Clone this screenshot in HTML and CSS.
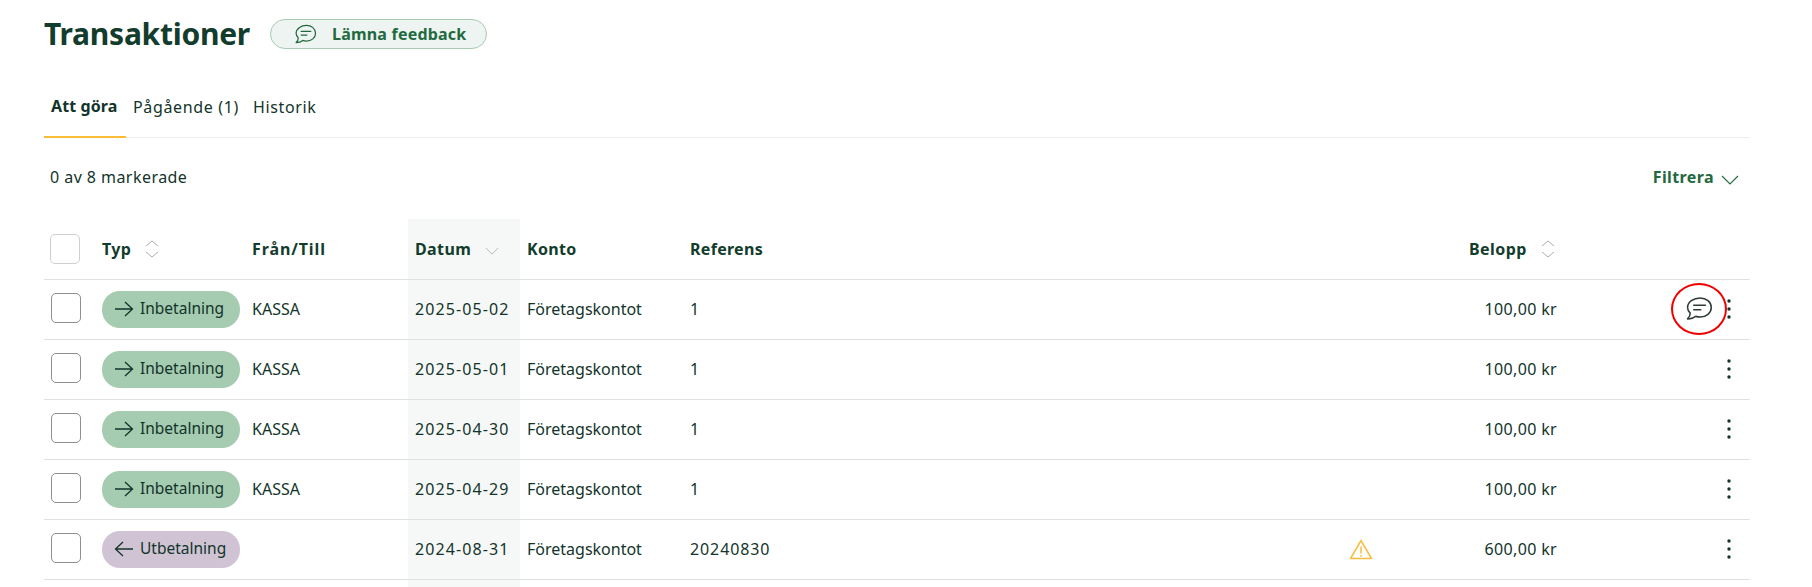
FILE: index.html
```html
<!DOCTYPE html>
<html lang="sv">
<head>
<meta charset="utf-8">
<title>Transaktioner</title>
<link rel="stylesheet" href="styles.css">
</head>
<body>
<svg class="defs" width="0" height="0" aria-hidden="true">
  <symbol id="bubble" viewBox="0 0 24 24"><path d="M13 2.500c5.200 0 9.500 3.500 9.500 8.200s-4.300 8.200-9.500 8.200c-1.300 0-2.600-.2-3.800-.7-1.500 1.300-4 2.300-7 2.300 1.300-1.200 2.300-3 2.300-5-1.500-1.400-2.300-3-2.300-4.800 0-4.700 5.100-8.200 10.800-8.200Z" fill="none" stroke="currentColor" stroke-width="1.300" stroke-linejoin="round"/><path d="M7.500 8.800h10M7.500 12.600h6" fill="none" stroke="currentColor" stroke-width="1.300" stroke-linecap="round"/></symbol>
  <symbol id="dots" viewBox="0 0 4 20"><circle cx="2" cy="2" r="1.700"/><circle cx="2" cy="10" r="1.700"/><circle cx="2" cy="18" r="1.700"/></symbol>
  <symbol id="sort" viewBox="0 0 14 20"><path d="M1 7l6-5 6 5M1 13l6 5 6-5" fill="none" stroke="currentColor" stroke-width="1"/></symbol>
  <symbol id="down" viewBox="0 0 18 10"><path d="M1 1l8 8 8-8" fill="none" stroke="currentColor" stroke-width="1.100"/></symbol>
  <symbol id="right" viewBox="0 0 20 16"><path d="M1 8h17.500M11 1l7.500 7-7.500 7" fill="none" stroke="currentColor" stroke-width="1.300"/></symbol>
  <symbol id="left" viewBox="0 0 20 16"><path d="M19 8H1.500M9 1L1.500 8 9 15" fill="none" stroke="currentColor" stroke-width="1.300"/></symbol>
</svg>
<main class="page">
  <header class="head">
    <h1 class="title">Transaktioner</h1>
    <button class="feedback"><svg class="feedback-icon"><use href="#bubble"/></svg><span>Lämna feedback</span></button>
  </header>
  <nav class="tabs">
    <a class="tab tab-active">Att göra</a>
    <a class="tab">Pågående (1)</a>
    <a class="tab">Historik</a>
  </nav>
  <div class="toolbar">
    <span class="count">0 av 8 markerade</span>
    <button class="filter">Filtrera<svg class="filter-icon"><use href="#down"/></svg></button>
  </div>
  <table class="grid">
    <colgroup>
      <col class="c-check"><col class="c-type"><col class="c-from"><col class="c-date"><col class="c-account"><col class="c-ref"><col class="c-warn"><col class="c-amount"><col>
    </colgroup>
    <thead>
      <tr>
        <th><span class="box box-head"></span></th>
        <th>Typ<svg class="sort"><use href="#sort"/></svg></th>
        <th><span class="from-head">Från/Till</span></th>
        <th class="date">Datum<svg class="sort-down"><use href="#down"/></svg></th>
        <th>Konto</th>
        <th>Referens</th>
        <th></th>
        <th class="amount-head">Belopp<svg class="sort"><use href="#sort"/></svg></th>
        <th></th>
      </tr>
    </thead>
    <tbody>
      <tr>
        <td><span class="box"></span></td>
        <td><span class="pill pill-in"><svg class="arrow"><use href="#right"/></svg>Inbetalning</span></td>
        <td>KASSA</td><td class="date">2025-05-02</td><td>Företagskontot</td><td class="ref">1</td><td></td>
        <td class="amount">100,00 kr</td>
        <td class="actions"><span class="comment"><svg class="comment-icon"><use href="#bubble"/></svg></span><svg class="dots"><use href="#dots"/></svg></td>
      </tr>
      <tr>
        <td><span class="box"></span></td>
        <td><span class="pill pill-in"><svg class="arrow"><use href="#right"/></svg>Inbetalning</span></td>
        <td>KASSA</td><td class="date">2025-05-01</td><td>Företagskontot</td><td class="ref">1</td><td></td>
        <td class="amount">100,00 kr</td>
        <td class="actions"><svg class="dots"><use href="#dots"/></svg></td>
      </tr>
      <tr>
        <td><span class="box"></span></td>
        <td><span class="pill pill-in"><svg class="arrow"><use href="#right"/></svg>Inbetalning</span></td>
        <td>KASSA</td><td class="date">2025-04-30</td><td>Företagskontot</td><td class="ref">1</td><td></td>
        <td class="amount">100,00 kr</td>
        <td class="actions"><svg class="dots"><use href="#dots"/></svg></td>
      </tr>
      <tr>
        <td><span class="box"></span></td>
        <td><span class="pill pill-in"><svg class="arrow"><use href="#right"/></svg>Inbetalning</span></td>
        <td>KASSA</td><td class="date">2025-04-29</td><td>Företagskontot</td><td class="ref">1</td><td></td>
        <td class="amount">100,00 kr</td>
        <td class="actions"><svg class="dots"><use href="#dots"/></svg></td>
      </tr>
      <tr>
        <td><span class="box"></span></td>
        <td><span class="pill pill-out"><svg class="arrow"><use href="#left"/></svg>Utbetalning</span></td>
        <td></td><td class="date">2024-08-31</td><td>Företagskontot</td><td class="ref">20240830</td>
        <td class="warn-cell"><svg class="warn" viewBox="0 0 24 21"><path d="M12 1.500 1.500 19.500h21Z" fill="none" stroke="#f8bd40" stroke-width="1.500" stroke-linejoin="round"/><path d="M12 7.500v7M12 16v1.700" fill="none" stroke="#f8bd40" stroke-width="1.500"/></svg></td>
        <td class="amount">600,00 kr</td>
        <td class="actions"><svg class="dots"><use href="#dots"/></svg></td>
      </tr>
      <tr class="row-cut"><td></td><td></td><td></td><td class="date"></td><td></td><td></td><td></td><td></td><td></td></tr>
    </tbody>
  </table>
</main>
</body>
</html>
```
FILE: styles.css
```css
* { box-sizing: border-box; }
html, body { margin: 0; height: 587px; overflow: hidden; background: #fff; }
body { font-family: "Noto Sans", "Liberation Sans", sans-serif; color: #12342a; font-size: 16px; }
.defs { position: absolute; }
.page { padding: 0 62px 0 44px; }
.head { display: flex; align-items: center; height: 68px; gap: 20px; }
.title { margin: 0 0 2px; font-size: 30px; font-weight: 700; letter-spacing: -.25px; color: #123c2c; }
.feedback { display: flex; align-items: center; width: 217px; height: 30px; padding: 0 0 0 23px; gap: 15px; background: #eef4f1; border: 1px solid #a5cbb0; border-radius: 15px; color: #23693f; font: 700 16px "Noto Sans", sans-serif; letter-spacing: .2px; }
.feedback-icon { width: 23px; height: 23px; color: #23693f; }
.tabs { display: flex; height: 70px; border-bottom: 1px solid #eeeeee; }
.tab { display: flex; align-items: center; padding: 7px 7px 0; font-size: 16px; color: #12342a; letter-spacing: .65px; margin-bottom: -1px; }
.tab-active { font-weight: 700; width: 82px; letter-spacing: .1px; border-bottom: 2px solid #fbbc36; }
.toolbar { display: flex; justify-content: space-between; align-items: center; height: 81px; padding: 0 11px 3px 6px; }
.count { font-size: 16px; letter-spacing: .45px; }
.filter { display: flex; align-items: center; gap: 7px; background: none; border: 0; padding: 0; color: #23693f; font: 700 16px "Noto Sans", sans-serif; letter-spacing: .4px; }
.filter-icon { width: 18px; height: 10px; margin-top: 5px; }
.grid { width: 100%; border-collapse: collapse; table-layout: fixed; }
.c-check { width: 51px; }
.c-type { width: 150px; }
.c-from { width: 163px; }
.c-date { width: 112px; }
.c-account { width: 163px; }
.c-ref { width: 620px; }
.c-warn { width: 116px; }
.c-amount { width: 138px; }
.grid th, .grid td { height: 60px; padding: 0 0 0 7px; text-align: left; vertical-align: middle; border-bottom: 1px solid #e1e1e1; white-space: nowrap; }
.grid th { font-size: 16px; font-weight: 700; letter-spacing: .3px; color: #123c2c; }
.grid th:first-child, .grid td:first-child { padding-left: 0; }
.grid .row-cut td { height: 8px; border: 0; }
.grid .date { background: #f6f8f7; letter-spacing: 1.1px; }
.grid th.date { letter-spacing: .4px; }
.from-head { letter-spacing: .9px; }
.grid .ref { letter-spacing: .9px; }
.box { display: block; width: 30px; height: 30px; margin: 0 0 2px 7px; border: 1px solid #8f8f8f; border-radius: 5px; background: #fff; }
.box-head { margin: 0 0 0 6px; border-color: #cfcfcf; }
.pill { display: inline-flex; align-items: center; width: 138px; height: 37px; padding: 0 0 2px 12px; gap: 6px; border-radius: 18px; font-size: 15.500px; color: #12342a; vertical-align: middle; }
.pill-in { background: #a5cbb0; }
.pill-out { background: #d0c4d4; }
.arrow { width: 20px; height: 16px; margin-top: 2px; }
.sort { width: 14px; height: 20px; margin-left: 14px; color: #adadad; vertical-align: -4px; }
.sort-down { width: 14px; height: 8px; margin-left: 14px; color: #adadad; }
.grid .amount-head { padding-left: 50px; letter-spacing: .45px; }
.grid .amount { text-align: right; padding-left: 0; letter-spacing: .35px; }
.grid .warn-cell { padding-left: 46px; }
.warn { width: 24px; height: 21px; display: block; }
.actions { position: relative; }
.dots { display: block; width: 4px; height: 20px; margin-left: 163px; fill: #12342a; }
.comment { position: absolute; left: 114px; top: 3px; width: 56px; height: 52px; display: flex; align-items: center; justify-content: center; border: 2px solid #f00000; border-radius: 50%; }
.comment-icon { width: 28px; height: 28px; color: #2e3a36; }
```
